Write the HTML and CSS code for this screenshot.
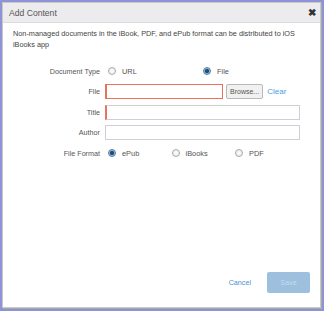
FILE: index.html
```html
<!DOCTYPE html>
<html lang="en">
<head>
    <meta charset="UTF-8">
    <title>Add Content</title>
    <link rel="stylesheet" href="styles.css">
</head>
<body>
    <div class="dialog">
        <div class="dialog-header">
            <span class="dialog-title">Add Content</span>
            <span class="close">&#x2716;</span>
        </div>

        <div class="dialog-body">
            <p class="intro">Non-managed documents in the iBook, PDF, and ePub format can be distributed to iOS iBooks app</p>

            <div class="form">
                <div class="form-row">
                    <label class="form-label">Document Type</label>
                    <div class="radio-group">
                        <span class="radio-option wide"><span class="radio"></span>URL</span>
                        <span class="radio-option"><span class="radio checked"></span>File</span>
                    </div>
                </div>

                <div class="form-row">
                    <label class="form-label">File</label>
                    <input type="text" class="input input-file invalid">
                    <button class="browse">Browse...</button>
                    <a class="clear">Clear</a>
                </div>

                <div class="form-row">
                    <label class="form-label">Title</label>
                    <input type="text" class="input required">
                </div>

                <div class="form-row">
                    <label class="form-label">Author</label>
                    <input type="text" class="input">
                </div>

                <div class="form-row">
                    <label class="form-label">File Format</label>
                    <div class="radio-group">
                        <span class="radio-option fmt"><span class="radio checked"></span>ePub</span>
                        <span class="radio-option fmt"><span class="radio"></span>iBooks</span>
                        <span class="radio-option"><span class="radio"></span>PDF</span>
                    </div>
                </div>
            </div>
        </div>

        <div class="dialog-footer">
            <a class="cancel">Cancel</a>
            <button class="save" disabled>Save</button>
        </div>
    </div>
</body>
</html>
```

FILE: styles.css
```css
* {
    margin: 0;
    padding: 0;
    box-sizing: border-box;
}

html, body {
    height: 100%;
}

body {
    font-family: 'Liberation Sans', Arial, sans-serif;
    background: #8e92d6;
    padding: 2px 3px 3px 2px;
    color: #444;
}

.dialog {
    height: 100%;
    background: #fff;
    border: 1px solid #c9c9c9;
    box-shadow: 1px 1px 0 #a9a9a9;
    display: flex;
    flex-direction: column;
}

.dialog-header {
    height: 20px;
    background: #ececee;
    border-bottom: 1px solid #dcdcdc;
    display: flex;
    align-items: center;
    justify-content: space-between;
    padding: 0 4px 0 6px;
}

.dialog-title {
    font-size: 8.6px;
    color: #555;
}

.close {
    font-size: 10px;
    color: #333;
    font-weight: bold;
}

.dialog-body {
    flex: 1;
    padding: 5px 10px 0 10px;
}

.intro {
    font-size: 7.3px;
    line-height: 11px;
    color: #444;
    padding-right: 14px;
}

.form {
    margin-top: 11px;
}

.form-row {
    display: flex;
    align-items: center;
    height: 20.5px;
}

.form-label {
    width: 92px;
    text-align: right;
    font-size: 7.2px;
    color: #555;
    padding-right: 5px;
}

.radio-group {
    display: flex;
    align-items: center;
}

.radio-option {
    display: flex;
    align-items: center;
    font-size: 7.4px;
    color: #555;
}

.radio-option.wide {
    width: 95px;
}

.radio-option.fmt {
    width: 63.5px;
}

.radio {
    width: 8px;
    height: 8px;
    border-radius: 50%;
    border: 1px solid #aaa;
    background: radial-gradient(circle, #fff 0%, #e4e4e4 100%);
    margin: 0 6px 0 3px;
}

.radio.checked {
    border-color: #5b7d9e;
    background: radial-gradient(circle, #1d4f7c 0, #1d4f7c 1.8px, #8fb3d3 2.4px, #cfe0ef 100%);
}

.input {
    height: 15px;
    width: 195px;
    border: 1px solid #cfcfd6;
    background: #fff;
    font-size: 8px;
}

.input-file {
    width: 118px;
}

.invalid {
    border-color: #e8735a;
    border-left-width: 2px;
}

.required {
    border-left: 2px solid #e8735a;
}

.browse {
    height: 15px;
    margin-left: 3px;
    padding: 0 3px;
    font-family: inherit;
    font-size: 7px;
    color: #555;
    background: #f1f1f1;
    border: 1px solid #b9b9b9;
    border-radius: 2px;
}

.clear {
    margin-left: 4px;
    font-size: 8px;
    color: #4a9ee8;
}

.dialog-footer {
    display: flex;
    align-items: center;
    justify-content: flex-end;
    padding: 0 10px 14px 0;
}

.cancel {
    font-size: 7.2px;
    color: #4a8fd8;
    margin-right: 16px;
}

.save {
    width: 43px;
    height: 21px;
    border: none;
    border-radius: 2px;
    background: #9cc0de;
    color: #c6dcef;
    font-family: inherit;
    font-size: 7.2px;
}
```
